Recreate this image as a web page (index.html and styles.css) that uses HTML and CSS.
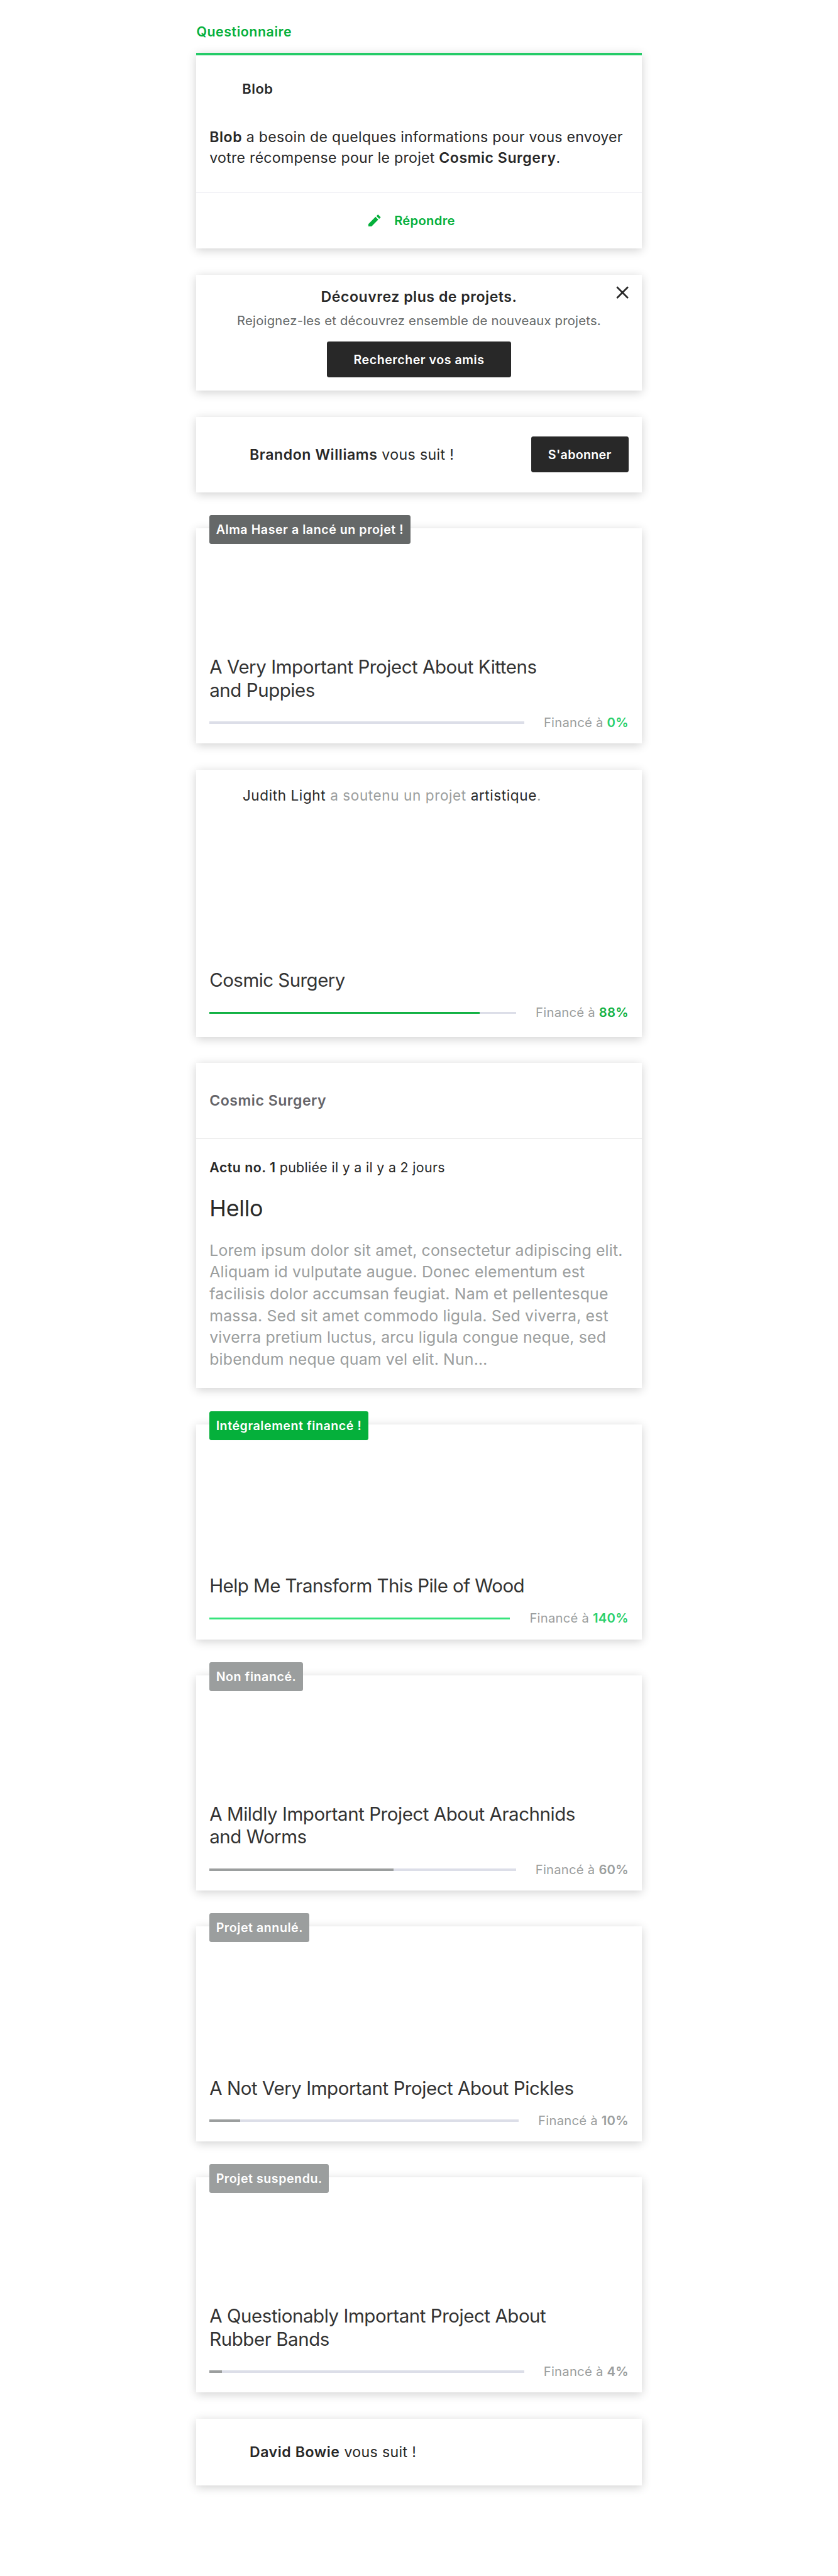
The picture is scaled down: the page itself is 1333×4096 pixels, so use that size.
FILE: index.html
```html
<!DOCTYPE html>
<html lang="fr">
<head>
<meta charset="utf-8">
<title>Activité</title>
<link rel="stylesheet" href="styles.css">
</head>
<body>
<main class="feed">
  <h2 class="kicker">Questionnaire</h2>
  <article class="card survey">
    <div class="survey-creator">Blob</div>
    <p class="survey-text"><b>Blob</b> a besoin de quelques informations pour vous envoyer<br>votre récompense pour le projet <b>Cosmic Surgery</b>.</p>
    <div class="survey-action">
      <svg class="pencil" viewBox="0 0 34 34"><path d="M0 34V26.2L19.6 6.6L27.1 14.1L7.6 34ZM22.1 4.5L26.1 .5Q26.5 .1 26.9 .5L33.6 7.2Q34 7.6 33.6 8L29.6 12Z"/></svg>
      <span>Répondre</span>
    </div>
  </article>

  <article class="card find-friends">
    <h3 class="ff-title">Découvrez plus de projets.</h3>
    <p class="ff-text">Rejoignez-les et découvrez ensemble de nouveaux projets.</p>
    <button class="btn btn-wide">Rechercher vos amis</button>
    <svg class="close" viewBox="0 0 35 35"><path d="M2.2 2.2L32.8 32.8M32.8 2.2L2.2 32.8"/></svg>
  </article>

  <article class="card follow">
    <p class="follow-text"><b>Brandon Williams</b> vous suit !</p>
    <button class="btn">S'abonner</button>
  </article>

  <article class="card project">
    <span class="tag tag-dark">Alma Haser a lancé un projet !</span>
    <h3 class="title">A Very Important Project About Kittens<br>and Puppies</h3>
    <div class="funding live"><div class="track"><div class="fill" style="width:0%"></div></div><span class="pct">Financé à <b>0%</b></span></div>
  </article>

  <article class="card backing">
    <p class="backing-text"><em>Judith Light</em> a soutenu un projet <em>artistique</em>.</p>
    <h3 class="title tight">Cosmic Surgery</h3>
    <div class="funding backed"><div class="track"><div class="fill" style="width:88%"></div></div><span class="pct">Financé à <b>88%</b></span></div>
  </article>

  <article class="card update">
    <header class="update-head">Cosmic Surgery</header>
    <div class="update-body">
      <p class="update-meta"><b>Actu no. 1</b> publiée il y a il y a 2 jours</p>
      <h3 class="update-title">Hello</h3>
      <p class="update-text">Lorem ipsum dolor sit amet, consectetur adipiscing elit.<br>Aliquam id vulputate augue. Donec elementum est<br>facilisis dolor accumsan feugiat. Nam et pellentesque<br>massa. Sed sit amet commodo ligula. Sed viverra, est<br>viverra pretium luctus, arcu ligula congue neque, sed<br>bibendum neque quam vel elit. Nun…</p>
    </div>
  </article>

  <article class="card project">
    <span class="tag tag-green">Intégralement financé !</span>
    <h3 class="title tight">Help Me Transform This Pile of Wood</h3>
    <div class="funding live"><div class="track"><div class="fill" style="width:100%"></div></div><span class="pct">Financé à <b>140%</b></span></div>
  </article>

  <article class="card project">
    <span class="tag">Non financé.</span>
    <h3 class="title">A Mildly Important Project About Arachnids<br>and Worms</h3>
    <div class="funding"><div class="track"><div class="fill" style="width:60%"></div></div><span class="pct">Financé à <b>60%</b></span></div>
  </article>

  <article class="card project">
    <span class="tag">Projet annulé.</span>
    <h3 class="title">A Not Very Important Project About Pickles</h3>
    <div class="funding"><div class="track"><div class="fill" style="width:10%"></div></div><span class="pct">Financé à <b>10%</b></span></div>
  </article>

  <article class="card project">
    <span class="tag">Projet suspendu.</span>
    <h3 class="title">A Questionably Important Project About<br>Rubber Bands</h3>
    <div class="funding"><div class="track"><div class="fill" style="width:4%"></div></div><span class="pct">Financé à <b>4%</b></span></div>
  </article>

  <article class="card follow follow-short">
    <p class="follow-text"><b>David Bowie</b> vous suit !</p>
  </article>
</main>
</body>
</html>
```
FILE: styles.css
```css
* { box-sizing: border-box; margin: 0; padding: 0; }

html { font-size: 57.856px; background: #fff; }

body {
  font-family: Inter, "Liberation Sans", sans-serif;
  font-size: .4rem;
  color: #282828;
  height: 4096px;
  overflow: hidden;
  white-space: nowrap;
}

b { font-weight: 600; }

.feed { width: 12.24rem; margin: 0 auto; padding-top: .6155rem; }

.kicker {
  font-size: .37rem;
  font-weight: 600;
  line-height: .5rem;
  letter-spacing: .025em;
  color: #05b03b;
  margin-bottom: .3445rem;
}

.card {
  position: relative;
  display: flex;
  flex-direction: column;
  background: #fff;
  box-shadow: 0 .055rem .25rem rgba(0, 0, 0, .19);
  margin-bottom: .72rem;
}

.card:has(+ .project) { margin-bottom: .99rem; }

/* Survey */
.survey { height: 5.37rem; border-top: 4px solid #25cb68; padding-top: .555rem; }
.survey-creator {
  height: .72rem;
  line-height: .72rem;
  padding-left: 1.26rem;
  font-size: .38rem;
  font-weight: 600;
  letter-spacing: .02em;
}
.survey-text {
  margin-top: .68rem;
  padding: 0 .36rem;
  line-height: .572rem;
  letter-spacing: .011em;
}
.survey-text b { letter-spacing: .022em; }
.survey-action {
  display: flex;
  align-items: center;
  justify-content: center;
  margin-top: auto;
  height: 1.535rem;
  padding: 0 .4rem .02rem 0;
  border-top: 1px solid #ebebf1;
  font-size: .35rem;
  font-weight: 600;
  letter-spacing: .0138em;
  color: #05b03b;
  gap: .37rem;
}
.pencil { width: .34rem; height: .34rem; fill: currentColor; }

/* Find friends */
.find-friends { height: 3.19rem; align-items: center; padding-top: .373rem; }
.ff-title { font-size: .4rem; font-weight: 600; line-height: .5rem; letter-spacing: .022em; }
.ff-text { font-size: .35rem; line-height: .46rem; letter-spacing: .0113em; color: #656868; margin: .166rem 0 .341rem; }
.close {
  position: absolute;
  top: .31rem;
  right: .36rem;
  width: .35rem;
  height: .35rem;
  stroke: #282828;
  stroke-width: 4.6;
}

.btn {
  width: 2.68rem;
  height: .99rem;
  border: 0;
  border-radius: .06rem;
  background: #282828;
  color: #fff;
  font: 600 .34rem Inter, "Liberation Sans", sans-serif;
  letter-spacing: .0145em;
}
.btn-wide { width: 5.07rem; letter-spacing: .0256em; }

/* Follow */
.follow {
  height: 2.07rem;
  flex-direction: row;
  align-items: center;
  justify-content: space-between;
  padding: 0 .36rem 0 1.46rem;
}
.follow-short { height: 1.83rem; }
.follow-text { letter-spacing: .015em; }
.follow-text b { letter-spacing: .024em; }

/* Projects */
.project { height: 5.91rem; justify-content: flex-end; padding: 0 .36rem .34rem; }
.tag {
  position: absolute;
  left: .36rem;
  top: -.36rem;
  height: .79rem;
  line-height: .8rem;
  padding: 0 .18rem;
  border-radius: .06rem;
  background: #9b9e9e;
  color: #fff;
  font-size: .34rem;
  font-weight: 600;
  letter-spacing: .0265em;
}
.tag-dark { background: #656868; }
.tag-green { background: #05b03b; }

.title {
  font-size: .51rem;
  font-weight: 400;
  line-height: .63rem;
  letter-spacing: -.0155em;
  color: #333;
  margin-bottom: .356rem;
}
.title.tight { letter-spacing: -.0189em; }

.funding { display: flex; align-items: center; gap: .536rem; line-height: .46rem; color: #9b9e9e; }
.track { flex: 1; height: .06rem; background: #dcdee8; }
.fill { height: 100%; background: #9b9e9e; }
.pct { font-size: .35rem; letter-spacing: .0121em; }
.live .fill { background: #37e47c; }
.live b { color: #2bd06b; }
.backed .fill { background: #12b244; }
.backed b { color: #12b244; }

/* Backing */
.backing { height: 7.35rem; padding: .35rem .36rem .43rem; }
.backing-text { font-size: .39rem; line-height: .72rem; padding-left: .91rem; letter-spacing: .026em; color: #9b9e9e; }
.backing-text em { font-style: normal; color: #282828; }
.backing .title { margin-top: auto; margin-bottom: .363rem; }

/* Update */
.update { height: 8.935rem; }
.update-head {
  height: 2.09rem;
  line-height: 2.08rem;
  padding-left: .36rem;
  border-bottom: 1px solid #ebebeb;
  font-weight: 600;
  letter-spacing: .021em;
  color: #656469;
}
.update-body { padding: .555rem .36rem 0; }
.update-meta { font-size: .37rem; line-height: .46rem; letter-spacing: .0145em; }
.update-meta b { letter-spacing: .021em; }
.update-title { font-size: .62rem; font-weight: 400; line-height: .74rem; letter-spacing: -.0076em; margin-top: .513rem; }
.update-text { font-size: .43rem; line-height: .598rem; letter-spacing: .006em; color: #9b9e9e; margin-top: .487rem; }
```
